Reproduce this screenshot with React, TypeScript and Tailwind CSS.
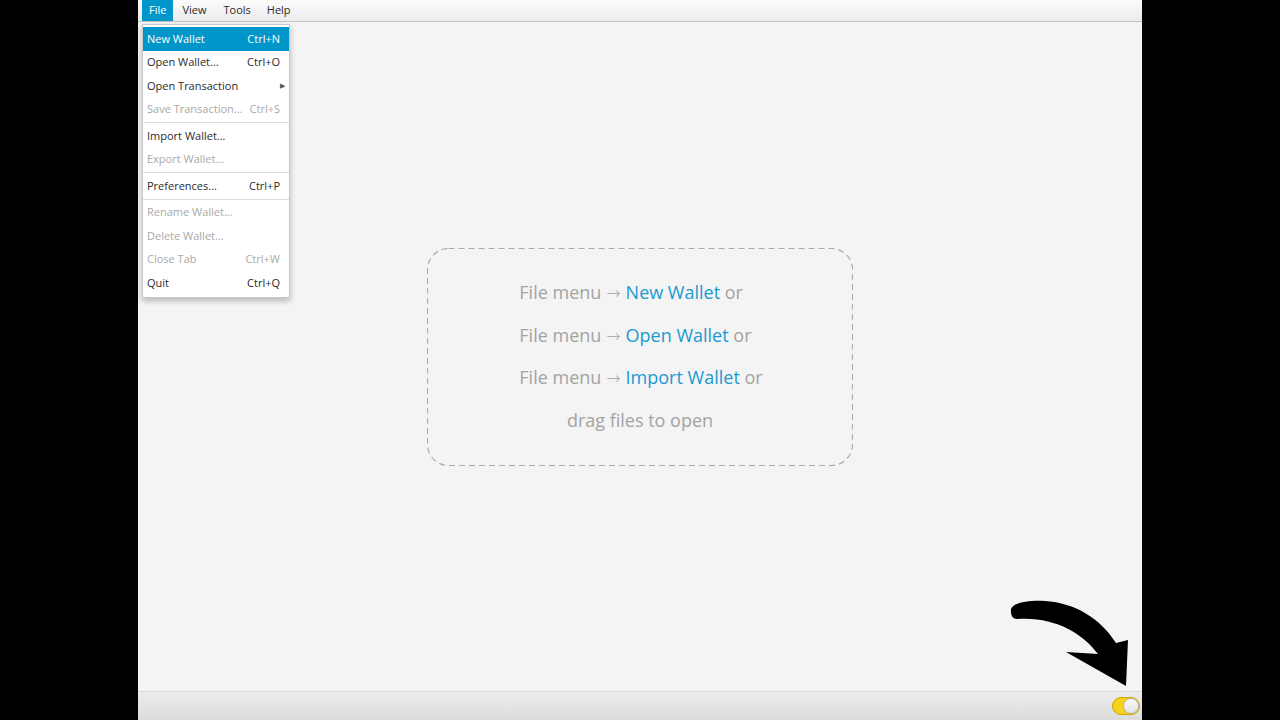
import { Fragment } from "react";

type Item = { label: string; shortcut?: string; disabled?: boolean; active?: boolean; submenu?: boolean; sep?: boolean };

const items: Item[] = [
  { label: "New Wallet", shortcut: "Ctrl+N", active: true },
  { label: "Open Wallet...", shortcut: "Ctrl+O" },
  { label: "Open Transaction", submenu: true },
  { label: "Save Transaction...", shortcut: "Ctrl+S", disabled: true, sep: true },
  { label: "Import Wallet..." },
  { label: "Export Wallet...", disabled: true, sep: true },
  { label: "Preferences...", shortcut: "Ctrl+P", sep: true },
  { label: "Rename Wallet...", disabled: true },
  { label: "Delete Wallet...", disabled: true },
  { label: "Close Tab", shortcut: "Ctrl+W", disabled: true },
  { label: "Quit", shortcut: "Ctrl+Q" },
];

const font = { fontFamily: "'Open Sans', 'Noto Sans', sans-serif" };

function FileMenu() {
  return (
    <div className="absolute left-[4px] top-[24px] w-[148px] bg-white border border-[#c9c9c9] py-[2px] shadow-[0_3px_6px_rgba(0,0,0,0.25)] text-[11px] whitespace-nowrap">
      {items.map((it) => (
        <Fragment key={it.label}>
          <div
            className={`h-[23.5px] flex items-center justify-between pl-[4px] pr-[9px] ${
              it.active ? "bg-[#0096c9] text-white" : it.disabled ? "text-[#a9a9a9]" : "text-[#2b2b2b]"
            }`}
          >
            <span>{it.label}</span>
            {it.shortcut && <span>{it.shortcut}</span>}
            {it.submenu && <span className="text-[7px] text-[#555] -mr-[5px]">▶</span>}
          </div>
          {it.sep && <div className="h-px bg-[#dcdcdc] my-[1px]" />}
        </Fragment>
      ))}
    </div>
  );
}

function Arrow() {
  return (
    <span
      className="mx-[5px] text-[17px] font-extralight leading-none relative top-[1px]"
      style={{ fontFamily: "'DejaVu Sans', sans-serif" }}
    >
      →
    </span>
  );
}

function Line({ action }: { action: string }) {
  return (
    <div className="h-[42.5px] flex items-center whitespace-pre">
      File menu<Arrow />
      <span className="text-[#1a9ad0]">{action}</span> or
    </div>
  );
}

export default function App() {
  return (
    <div className="w-[1280px] h-[720px] bg-black flex justify-center" style={font}>
      <div className="w-[1004px] h-full flex flex-col bg-[#f4f4f4] relative">
        <div className="h-[22px] flex items-stretch pl-[4px] bg-gradient-to-b from-[#fbfbfb] to-[#ececec] border-b border-[#c4c4c4] text-[11px] text-[#2b2b2b]">
          <div className="px-[7px] flex items-center bg-[#0096c9] text-white">File</div>
          <div className="px-[9px] flex items-center">View</div>
          <div className="px-[8px] flex items-center">Tools</div>
          <div className="px-[8px] flex items-center">Help</div>
        </div>

        <div className="flex-1 flex items-center justify-center">
          <div className="relative w-[426px] h-[218px] flex flex-col items-center justify-center text-[18px] text-[#a3a3a3]">
            <svg className="absolute inset-0" width="426" height="218">
              <rect x="0.5" y="0.5" width="425" height="217" rx="21" fill="none" stroke="#acacac" strokeWidth="1.2" strokeDasharray="6 4" />
            </svg>
            <div className="relative flex flex-col items-start pl-[2px]">
              <Line action="New Wallet" />
              <Line action="Open Wallet" />
              <Line action="Import Wallet" />
            </div>
            <div className="relative h-[42.5px] flex items-center">drag files to open</div>
          </div>
        </div>

        <div className="h-[29px] border-t border-[#dadada] bg-gradient-to-b from-[#ececec] to-[#dcdcdc] flex items-center justify-end pr-[2px]">
          <div className="w-[28px] h-[18px] rounded-full bg-[#f6d21c] border border-[#c9a800] flex items-center justify-end">
            <div className="w-[16px] h-[16px] rounded-full bg-gradient-to-b from-[#fafafa] to-[#e4e4e4] border border-[#b5b5b5]" />
          </div>
        </div>

        <FileMenu />

        <svg className="absolute left-0 top-0 pointer-events-none" width="1004" height="720" viewBox="138 0 1004 720">
          <path
            d="M1011 612 C1009 604 1024 600 1045 601 C1075 603 1100 618 1116 643 L1128 640 L1126 686 L1066 652 L1098 654 C1082 632 1052 616 1017 619 C1013 619 1011 616 1011 612 Z"
            fill="#000"
          />
        </svg>
      </div>
    </div>
  );
}
